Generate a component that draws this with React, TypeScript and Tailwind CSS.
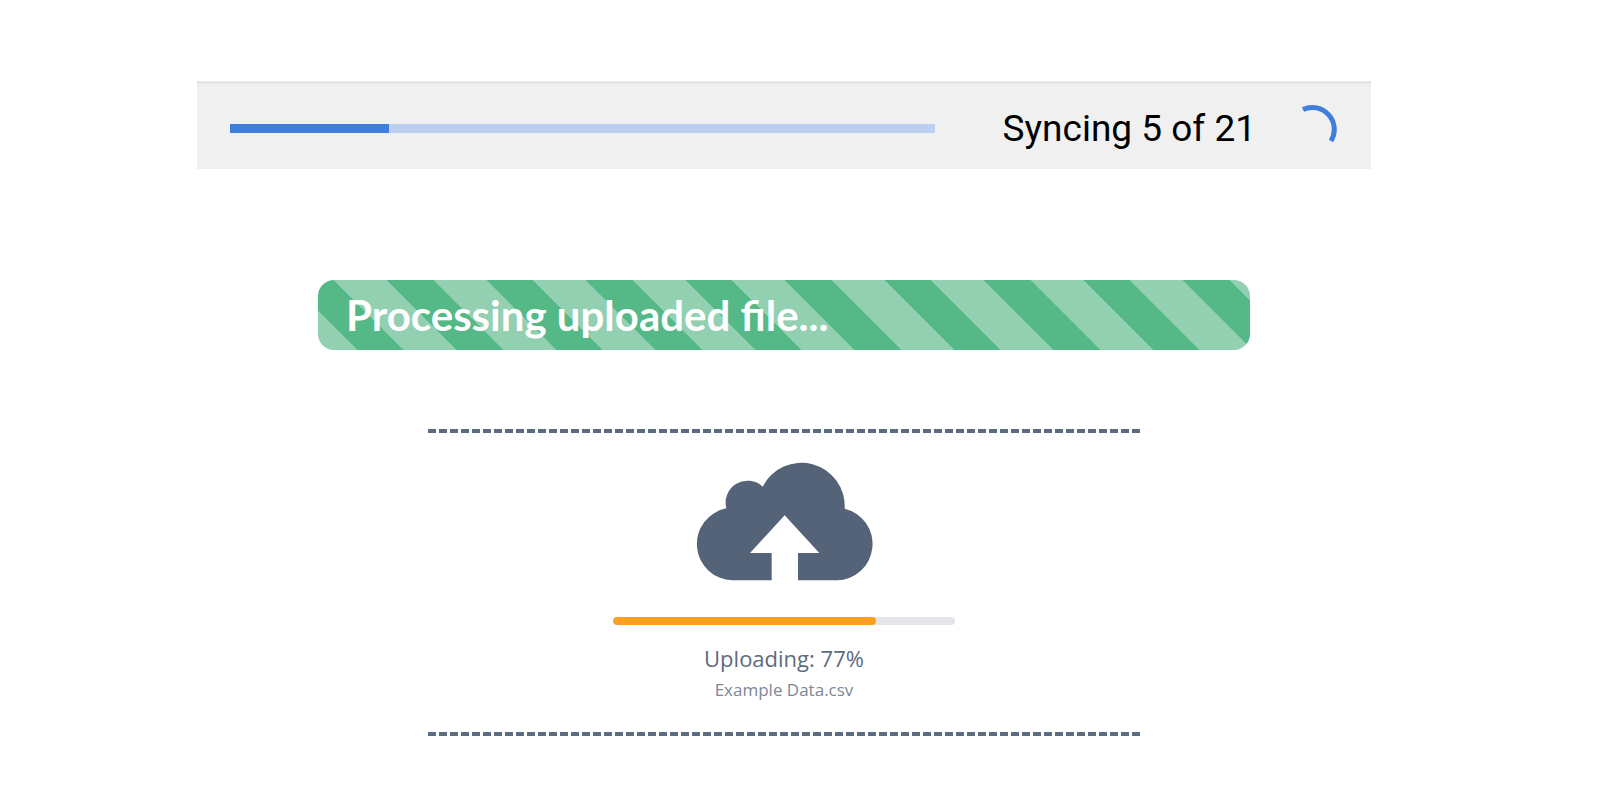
function SyncBar({ done, total }: { done: number; total: number }) {
  return (
    <section className="flex w-full max-w-[1174px] items-center border-t-3 border-[#e5e5e5] bg-[#f0f0f0] pt-5 pr-[34px] pb-[17px] pl-[33px]">
      <progress
        aria-label="Sync progress"
        value={22.5}
        max={100}
        className="block h-[9px] min-w-0 flex-1 appearance-none bg-[#bccff1] [&::-webkit-progress-bar]:bg-[#bccff1] [&::-webkit-progress-value]:bg-[#407edc]"
      />
      <p className="ml-[68px] font-['Roboto',sans-serif] text-[37px] leading-[45px] whitespace-nowrap text-black">
        Syncing {done} of {total}
      </p>
      <svg viewBox="0 0 48 48" className="ml-[33px] size-12 shrink-0" fill="none" aria-hidden="true">
        <path d="M14 5.5A22 22 0 0 1 42 37" stroke="#407edc" strokeWidth="5" />
      </svg>
    </section>
  );
}

function ProcessingBar() {
  return (
    <section className="w-full max-w-[932px] rounded-2xl bg-[repeating-linear-gradient(45deg,#93cfb1_0%,#93cfb1_3.9%,#54b987_3.9%,#54b987_8.54%,#93cfb1_8.54%,#93cfb1_9.93%)] px-7 py-[10px]">
      <p className="font-['Lato',sans-serif] text-[42px] leading-[50px] font-bold text-white">
        Processing uploaded file...
      </p>
    </section>
  );
}

function DashedRule() {
  return (
    <hr className="h-1 w-full border-0 bg-[repeating-linear-gradient(90deg,#5b6b81_0px,#5b6b81_8px,transparent_8px,transparent_11px)]" />
  );
}

function CloudUpload() {
  return (
    <svg viewBox="43 38 540 360" className="mt-[29px] h-[120px] w-[180px]" fill="#546378" aria-hidden="true">
      <path d="M158 393A109 109 0 0 1 140 177A66 66 0 0 1 249 112A130 130 0 0 1 495 178A109 109 0 0 1 472 393H355V311H419L315 198L211 311H276V393Z" />
    </svg>
  );
}

function UploadPanel({ percent, fileName }: { percent: number; fileName: string }) {
  return (
    <section className="flex w-full max-w-[712px] flex-col items-center font-['Open_Sans',sans-serif]">
      <DashedRule />
      <CloudUpload />
      <progress
        aria-label="Upload progress"
        value={percent}
        max={100}
        className="mt-[35px] block h-2 w-[342px] appearance-none overflow-hidden rounded-full bg-[#e3e5e9] [&::-webkit-progress-bar]:bg-[#e3e5e9] [&::-webkit-progress-value]:rounded-full [&::-webkit-progress-value]:bg-[#ff9f1f]"
      />
      <p className="mt-[17px] text-[22px] leading-8 text-[#5f6b80]">Uploading: {percent}%</p>
      <p className="mb-[26px] text-[17px] leading-8 text-[#7d8797]">{fileName}</p>
      <DashedRule />
    </section>
  );
}

export default function App() {
  return (
    <main className="flex min-h-screen flex-col items-center bg-white pt-[81px] pr-8">
      <SyncBar done={5} total={21} />
      <div className="mt-[111px] flex w-full justify-center">
        <ProcessingBar />
      </div>
      <div className="mt-[79px] flex w-full justify-center">
        <UploadPanel percent={77} fileName="Example Data.csv" />
      </div>
    </main>
  );
}
